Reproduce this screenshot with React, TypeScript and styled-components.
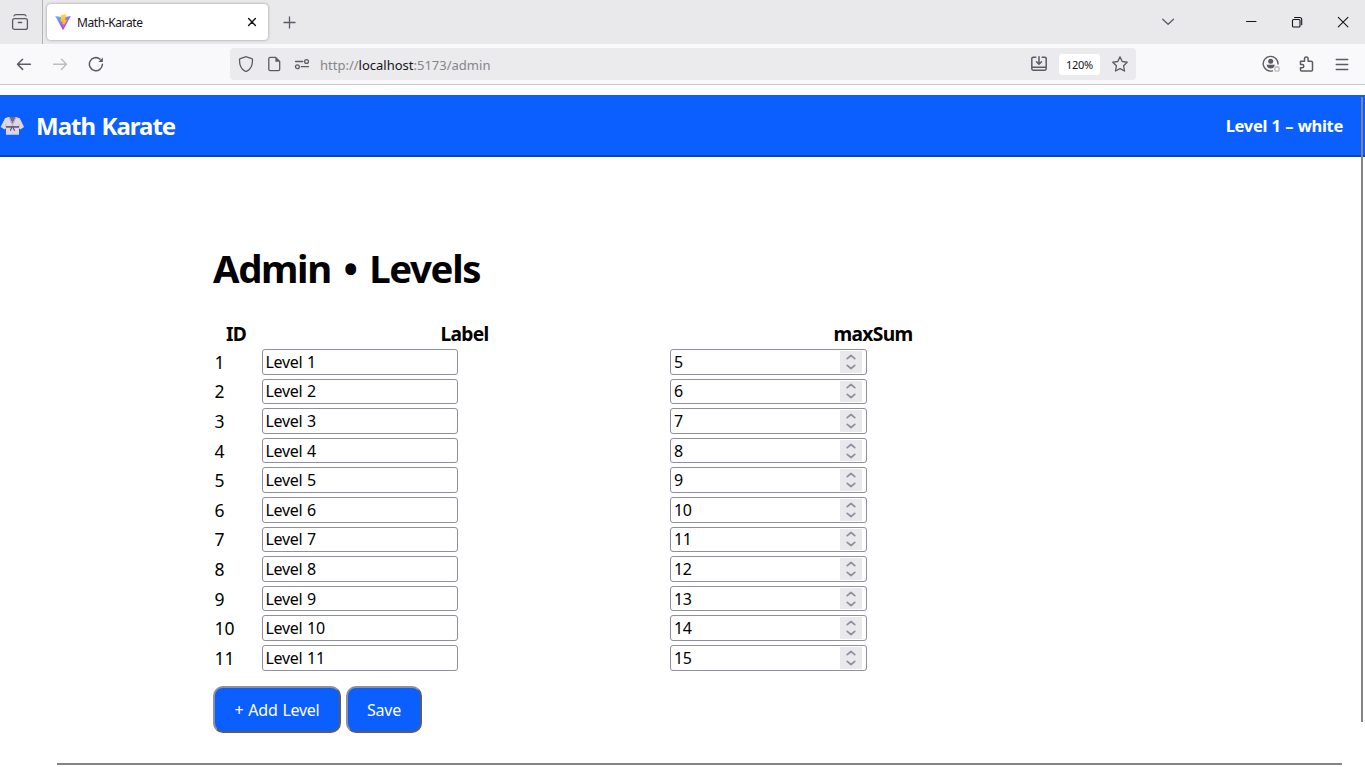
import React from "react";
import styled, { createGlobalStyle } from "styled-components";

const GlobalStyle = createGlobalStyle`
  *, *::before, *::after { box-sizing: border-box; }
  html, body { margin: 0; padding: 0; }
  body {
    width: 1365px;
    height: 767px;
    overflow: hidden;
    background: #fff;
    color: #000;
    font-family: "Noto Sans", "Open Sans", sans-serif;
  }
  svg { flex: none; display: block; }
`;

const Window = styled.div`
  position: relative;
  display: flex;
  flex-direction: column;
  width: 1365px;
  height: 767px;
  overflow: hidden;
`;

const TabBar = styled.div`
  display: flex;
  align-items: center;
  height: 44px;
  background: #e9e9eb;
  color: #5b5b66;
`;

const FirefoxView = styled.div`
  display: flex;
  align-items: center;
  width: 43px;
  height: 44px;
  padding-left: 11px;
  border-right: 1px solid #b3b3b6;
`;

const Tab = styled.div`
  display: flex;
  align-items: center;
  width: 221px;
  height: 36px;
  margin: 0 14px 0 4px;
  padding: 0 9px 0 8px;
  border-radius: 4px;
  background: #fff;
  box-shadow: 0 0 3px rgba(0, 0, 0, 0.38);
`;

const TabTitle = styled.span`
  flex: 1;
  margin-left: 6px;
  padding-top: 2px;
  color: #15141a;
  font-size: 12px;
  line-height: 16px;
  letter-spacing: -0.4px;
`;

const WindowControls = styled.div`
  display: flex;
  align-items: center;
  gap: 30px;
  margin-left: auto;
  padding-right: 14px;
  color: #15141a;
`;

const TabListButton = styled.div`
  display: flex;
  margin-right: 37px;
  color: #5b5b66;
`;

const NavBar = styled.div`
  display: flex;
  align-items: center;
  height: 41px;
  padding: 0 15px 0 16px;
  border-bottom: 1px solid #cccccf;
  background: #f9f9fb;
  color: #5b5b66;
`;

const NavButtons = styled.div`
  display: flex;
  gap: 20px;
  width: 214px;
`;

const AddressBar = styled.div`
  display: flex;
  align-items: center;
  width: 906px;
  height: 32px;
  padding: 0 8px;
  border-radius: 4px;
  background: #ebebed;
`;

const AddressIcons = styled.div`
  display: flex;
  gap: 12px;
`;

const Address = styled.div`
  flex: 1;
  margin-left: 10px;
  padding-top: 2px;
  color: #858589;
  font-size: 13px;
  line-height: 18px;
`;

const Host = styled.span`
  color: #15141a;
`;

const ZoomBadge = styled.div`
  width: 41px;
  height: 21px;
  margin: 0 12px;
  border-radius: 3px;
  background: #fff;
  color: #15141a;
  font-size: 11px;
  line-height: 22px;
  letter-spacing: -0.25px;
  text-align: center;
`;

const ToolbarActions = styled.div`
  display: flex;
  align-items: center;
  gap: 19px;
  margin-left: auto;
`;

const Viewport = styled.main`
  flex: 1;
  padding-top: 10px;
`;

const SiteHeader = styled.header`
  display: flex;
  align-items: center;
  justify-content: space-between;
  height: 62px;
  padding: 0 22px 0 0;
  border-bottom: 2px solid #0846b8;
  background: #0b5fff;
  color: #fff;
`;

const Brand = styled.div`
  display: flex;
  align-items: center;
  padding-top: 2px;
  font-size: 24px;
  line-height: 32px;
  font-weight: 700;
  letter-spacing: -1px;
  word-spacing: 1.2px;

  svg { margin-right: 12px; }
`;

const LevelStatus = styled.div`
  font-size: 16.5px;
  font-weight: 700;
  letter-spacing: -0.32px;
  word-spacing: 0.6px;
`;

const AdminSection = styled.section`
  margin: 85px 0 0 213px;
`;

const Title = styled.h1`
  margin: 0;
  font-size: 38.4px;
  line-height: 52px;
  font-weight: 700;
  letter-spacing: -1.4px;
  word-spacing: 4.2px;
`;

const LevelsTable = styled.div`
  margin-top: 23.5px;
`;

const Row = styled.div`
  display: grid;
  grid-template-columns: 46px 406px 406px;
  column-gap: 2.5px;
  align-items: center;
  height: 29.6px;
`;

const HeaderCell = styled.div`
  padding-top: 3px;
  font-size: 19.2px;
  line-height: 26px;
  font-weight: 700;
  text-align: center;
  letter-spacing: -0.68px;
`;

const IdCell = styled.div`
  padding-left: 1.5px;
  font-size: 17.5px;
  line-height: 24px;
`;

const Field = styled.div`
  display: flex;
  align-items: center;
  justify-content: space-between;
  width: 197px;
  height: 25.6px;
  padding: 0 4px 0 3px;
  border: 1px solid #8f8f9d;
  border-radius: 3px;
  background: #fff;
  font-size: 16px;
  line-height: 24px;
  letter-spacing: -0.34px;
  word-spacing: 1.1px;
`;

const LabelField = styled(Field)`
  width: 196.5px;
`;

const Spinner = styled.div`
  display: flex;
  align-items: center;
  justify-content: center;
  width: 22px;
  height: 21.6px;
  background: #e9e9ed;
`;

const Actions = styled.div`
  display: flex;
  gap: 5px;
  margin-top: 13.3px;
`;

const ActionButton = styled.button<{ $width: number }>`
  width: ${({ $width }) => $width}px;
  height: 47px;
  padding: 2px 0 0;
  border: 2px solid;
  border-color: #8f8f9d #5c5c66 #5c5c66 #8f8f9d;
  border-radius: 10px;
  background: #0b5fff;
  color: #fff;
  font-family: inherit;
  font-size: 16px;
  letter-spacing: -0.25px;
  word-spacing: 1px;
`;

const VerticalScroll = styled.div`
  position: absolute;
  top: 97px;
  left: 1361px;
  width: 2px;
  height: 625px;
  background: #858585;
`;

const HorizontalScroll = styled.div`
  position: absolute;
  top: 763px;
  left: 57px;
  width: 1285px;
  height: 2px;
  background: #858585;
`;

type IconProps = { size?: number; children: React.ReactNode; color?: string; weight?: number };

const Icon = ({ size = 16, children, color = "currentColor", weight = 1.3 }: IconProps) => (
  <svg
    width={size}
    height={size}
    viewBox={`0 0 ${size} ${size}`}
    fill="none"
    stroke={color}
    strokeWidth={weight}
    strokeLinecap="round"
    strokeLinejoin="round"
  >
    {children}
  </svg>
);

const ViteLogo = () => (
  <svg width="16" height="16" viewBox="0 0 16 16">
    <defs>
      <linearGradient id="shield" x1="0" y1="0" x2="0.6" y2="1">
        <stop offset="0" stopColor="#41c8ff" />
        <stop offset="0.5" stopColor="#9070ff" />
        <stop offset="1" stopColor="#bd34fe" />
      </linearGradient>
      <linearGradient id="bolt" x1="0" y1="0" x2="0" y2="1">
        <stop offset="0" stopColor="#ffdd35" />
        <stop offset="1" stopColor="#ffa800" />
      </linearGradient>
    </defs>
    <path d="M.2 2 8 3.2 15.9 2 8.4 15.4Q8 16 7.6 15.4Z" fill="url(#shield)" />
    <path d="M11.6.1 6 1.2 5.6 7.8 7.7 7.4 7.1 10.5 8.7 10 8 13.3 12.2 5.8 9.9 6.2Z" fill="url(#bolt)" />
  </svg>
);

const Gi = () => (
  <svg width="24" height="20" viewBox="0 0 24 20">
    <path d="M8.5 1 5 2.3.6 11 4.7 13.4 6 12.3V18.8h13v-6.5l1.3 1.1 3.7-2.4L19.8 2.3 16 1Z" fill="#dcd6e6" />
    <path d="M5.8 8v3M19.2 8v3" stroke="#bcb2cc" strokeWidth="0.8" />
    <path d="M9.3 1h6.4l-3.2 6.4Z" fill="#75698a" />
    <path d="m9 1.2 3.8 8.4M16 1.2l-3.8 8.4" stroke="#b3a9c2" strokeWidth="1" fill="none" />
    <path d="M6 10.9h13" stroke="#5d5071" strokeWidth="1.6" />
    <path d="m11.9 11.2-1.6 3.6M13 11.2l1.6 3.6" stroke="#5d5071" strokeWidth="1.1" />
  </svg>
);

const levels = Array.from({ length: 11 }, (_, i) => ({
  id: i + 1,
  label: `Level ${i + 1}`,
  maxSum: i + 5,
}));

export default function App() {
  return (
    <Window>
      <GlobalStyle />
      <TabBar>
        <FirefoxView>
          <Icon size={18}>
            <rect x="1.6" y="5.6" width="14.8" height="10.8" rx="2" />
            <path d="M3 2.9Q3.4 1.6 5 1.6h8q1.6 0 2 1.3M7.3 9.5h3.4" />
          </Icon>
        </FirefoxView>
        <Tab>
          <ViteLogo />
          <TabTitle>Math-Karate</TabTitle>
          <Icon size={14} color="#15141a" weight={1.4}>
            <path d="m3.6 3.6 6.8 6.8m0-6.8-6.8 6.8" />
          </Icon>
        </Tab>
        <Icon>
          <path d="M7.5 3v11M2 8.5h11" />
        </Icon>
        <WindowControls>
          <TabListButton>
            <Icon><path d="m2.7 5.3 5.4 5 5.4-5" /></Icon>
          </TabListButton>
          <Icon weight={1}><path d="M3.5 7.5h9.5" /></Icon>
          <Icon weight={1.1}>
            <rect x="3.5" y="5.5" width="7.5" height="7.5" rx="1" />
            <path d="M5.5 3.5h5.2q2 0 2 2v5.2" />
          </Icon>
          <Icon weight={1.1}><path d="m3.3 3.3 9.6 9.6m0-9.6-9.6 9.6" /></Icon>
        </WindowControls>
      </TabBar>
      <NavBar>
        <NavButtons>
          <Icon weight={1.5}><path d="M14.4 8.3H1.8M6.6 3.2 1.5 8.3l5.1 5.1" /></Icon>
          <Icon color="#bcbcc1" weight={1.4}><path d="M1.6 8.3h12.6M9.4 3.2l5.1 5.1-5.1 5.1" /></Icon>
          <Icon weight={1.5}>
            <path d="M14.4 8.3A6.5 6.5 0 1 1 12 3.1" />
            <path d="M14.9 1.5v4.6h-4.6Z" fill="currentColor" stroke="none" />
          </Icon>
        </NavButtons>
        <AddressBar>
          <AddressIcons>
            <Icon>
              <path d="M7.4.9Q8 .6 8.6.9l5.1 1.8q.7.3.8 1c.1 5-1.6 9.4-5.6 11.5q-.9.4-1.8 0C3.1 13.1 1.4 8.7 1.5 3.7q.1-.7.8-1Z" />
            </Icon>
            <Icon>
              <path d="M4.2 1.4h5.5l4 4v7.8q0 1.4-1.4 1.4H4.2q-1.4 0-1.4-1.4V2.8q0-1.4 1.4-1.4Z" />
              <path d="M9.4 1.2v4.6h4.4Z" fill="currentColor" stroke="none" />
            </Icon>
            <Icon>
              <path d="M1.5 5.5h7.3M7.3 10.7h7.2" />
              <circle cx="12.5" cy="5.5" r="1.9" />
              <circle cx="3.4" cy="10.7" r="1.9" />
            </Icon>
          </AddressIcons>
          <Address>http://<Host>localhost</Host>:5173/admin</Address>
          <Icon weight={1.5}>
            <path d="M4.8 1.3H2.2Q.8 1.3.8 2.7v10.1q0 1.4 1.4 1.4h11.6q1.4 0 1.4-1.4V2.7q0-1.4-1.4-1.4h-2.6M1 11.3h14M8 .8V8M5.5 5.7 8 8.2l2.5-2.5" />
          </Icon>
          <ZoomBadge>120%</ZoomBadge>
          <Icon>
            <path d="m8 .9 2.2 4.6 5 .7-3.6 3.6.9 5.2L8 12.6 3.5 15l.9-5.2L.8 6.2l5-.7Z" />
          </Icon>
        </AddressBar>
        <ToolbarActions>
          <Icon size={18} weight={1.4}>
            <path d="M10.5 15.9A7.4 7.4 0 1 1 16 9" />
            <circle cx="8.7" cy="6.2" r="2.5" fill="currentColor" stroke="none" />
            <path d="M4.6 9.8h8.2q-.4 3.6-4.1 3.6T4.6 9.8Z" fill="currentColor" stroke="none" />
            <circle cx="15" cy="13.9" r="2.2" stroke="#bcbcc1" fill="#f9f9fb" />
          </Icon>
          <Icon weight={1.5}>
            <path d="M1.5 5.2h4V2.8a1.8 1.8 0 0 1 3.6 0v2.4h3q1.4 0 1.4 1.4v7.4q0 1-1 1h-10q-1 0-1-1v-2.2h1.7a1.6 1.6 0 0 0 0-3.2H1.5Z" />
          </Icon>
          <Icon><path d="M2.2 3.5h11.6M2.2 8.5h11.6M2.2 13.5h11.6" /></Icon>
        </ToolbarActions>
      </NavBar>
      <Viewport>
        <SiteHeader>
          <Brand><Gi />Math Karate</Brand>
          <LevelStatus>Level 1 – white</LevelStatus>
        </SiteHeader>
        <AdminSection>
          <Title>Admin • Levels</Title>
          <LevelsTable>
            <Row>
              <HeaderCell>ID</HeaderCell>
              <HeaderCell>Label</HeaderCell>
              <HeaderCell>maxSum</HeaderCell>
            </Row>
            {levels.map((level) => (
              <Row key={level.id}>
                <IdCell>{level.id}</IdCell>
                <LabelField>{level.label}</LabelField>
                <Field>
                  {level.maxSum}
                  <Spinner>
                    <Icon color="#8f8f9d" weight={1.7}>
                      <path d="m4.2 4.7 3.8-3.2 3.8 3.2M4.2 11.3l3.8 3.2 3.8-3.2" />
                    </Icon>
                  </Spinner>
                </Field>
              </Row>
            ))}
          </LevelsTable>
          <Actions>
            <ActionButton $width={128}>+ Add Level</ActionButton>
            <ActionButton $width={76}>Save</ActionButton>
          </Actions>
        </AdminSection>
      </Viewport>
      <VerticalScroll />
      <HorizontalScroll />
    </Window>
  );
}
